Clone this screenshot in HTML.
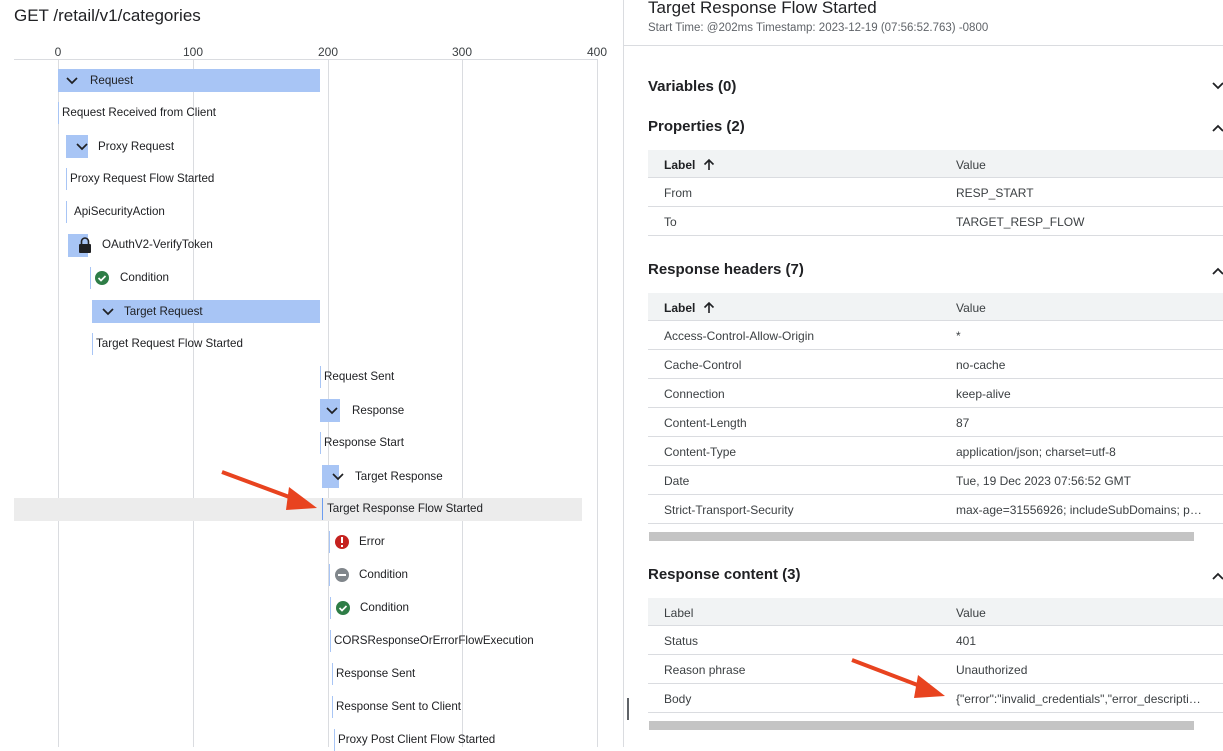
<!DOCTYPE html>
<html><head><meta charset="utf-8"><style>
*{margin:0;padding:0;box-sizing:border-box}
body{width:1223px;height:747px;overflow:hidden;background:#fff;font-family:"Liberation Sans",Arial,sans-serif;color:#202124;position:relative}
.a{position:absolute;white-space:nowrap}
.t{font-size:11.6px;color:#202124;line-height:14px}
.bar{position:absolute;background:#a8c5f5}
.ln{position:absolute;width:1px;background:#a8c5f5;height:22px}
.g{position:absolute;top:59px;width:1px;height:688px;background:#dadce0}
.tick{position:absolute;top:45px;font-size:12px;color:#3c4043;transform:translateX(-50%)}
.h{position:absolute;left:648px;font-size:15px;font-weight:bold;color:#202124}
.th{position:absolute;left:648px;width:575px;height:28px;background:#f1f3f4;border-bottom:1px solid #dadce0}
.row{position:absolute;left:648px;width:575px;height:29px;border-bottom:1px solid #dadce0}
.row span,.th span{position:absolute;top:8px;font-size:12px;color:#3c4043}
.c1{left:16px}.c2{left:308px}
.sb{position:absolute;left:649px;width:545px;height:9px;background:#c4c4c4}
</style></head><body>
<div class="a" style="left:14px;top:6px;font-size:17px">GET /retail/v1/categories</div>
<div class="tick" style="left:58px">0</div><div class="tick" style="left:193px">100</div><div class="tick" style="left:328px">200</div><div class="tick" style="left:462px">300</div><div class="tick" style="left:597px">400</div>
<div class="a" style="left:14px;top:59px;width:583px;height:1px;background:#dadce0"></div>
<div class="g" style="left:58px"></div><div class="g" style="left:193px"></div><div class="g" style="left:328px"></div><div class="g" style="left:462px"></div><div class="g" style="left:597px"></div>
<div class="a" style="left:14px;top:498px;width:568px;height:23px;background:#ececec"></div>

<div class="bar" style="left:58px;top:69px;width:262px;height:23px"></div>
<div class="bar" style="left:66px;top:135px;width:22px;height:23px"></div>
<div class="bar" style="left:68px;top:234px;width:20px;height:23px"></div>
<div class="bar" style="left:92px;top:300px;width:228px;height:23px"></div>
<div class="bar" style="left:320px;top:399px;width:20px;height:23px"></div>
<div class="bar" style="left:322px;top:465px;width:17px;height:23px"></div>

<div class="ln" style="left:58px;top:102px"></div>
<div class="ln" style="left:66px;top:168px"></div>
<div class="ln" style="left:66px;top:201px"></div>
<div class="ln" style="left:90px;top:267px"></div>
<div class="ln" style="left:92px;top:333px"></div>
<div class="ln" style="left:320px;top:366px"></div>
<div class="ln" style="left:320px;top:432px"></div>
<div class="ln" style="left:322px;top:498px;background:#6b9cf0"></div>
<div class="ln" style="left:329px;top:531px"></div>
<div class="ln" style="left:329px;top:564px"></div>
<div class="ln" style="left:330px;top:597px"></div>
<div class="ln" style="left:330px;top:630px"></div>
<div class="ln" style="left:332px;top:663px"></div>
<div class="ln" style="left:332px;top:696px"></div>
<div class="ln" style="left:334px;top:729px"></div>

<svg class="a" style="left:0;top:0" width="620" height="747">
<g fill="none" stroke="#202124" stroke-width="1.7">
<path d="M67 78l5 5 5-5"/><path d="M77 144l5 5 5-5"/><path d="M103 309l5 5 5-5"/><path d="M327 408l5 5 5-5"/><path d="M333 474l5 5 5-5"/>
</g>
<rect x="79" y="244" width="12" height="9" rx="1" fill="#202124"/><path d="M81.5 244v-2.5a3.5 3.5 0 0 1 7 0v2.5" stroke="#202124" stroke-width="1.6" fill="none"/>
<circle cx="102" cy="278" r="7" fill="#2e7d46"/><path d="M98.5 278l2.5 2.5 4.5-4.5" stroke="#fff" stroke-width="1.7" fill="none"/>
<circle cx="342" cy="542" r="7" fill="#c5221f"/><rect x="341" y="537" width="2" height="6" fill="#fff"/><rect x="341" y="545" width="2" height="2" fill="#fff"/>
<circle cx="342" cy="575" r="7" fill="#80868b"/><rect x="338" y="574" width="8" height="2" fill="#fff"/>
<circle cx="343" cy="608" r="7" fill="#2e7d46"/><path d="M339.5 608l2.5 2.5 4.5-4.5" stroke="#fff" stroke-width="1.7" fill="none"/>
<path d="M222 472L300 501" stroke="#e8431f" stroke-width="4"/><path d="M289 487L317 508 286 510z" fill="#e8431f"/>
</svg>

<div class="a t" style="left:90px;top:74px">Request</div>
<div class="a t" style="left:62px;top:106px">Request Received from Client</div>
<div class="a t" style="left:98px;top:140px">Proxy Request</div>
<div class="a t" style="left:70px;top:172px">Proxy Request Flow Started</div>
<div class="a t" style="left:74px;top:205px">ApiSecurityAction</div>
<div class="a t" style="left:102px;top:238px">OAuthV2-VerifyToken</div>
<div class="a t" style="left:120px;top:271px">Condition</div>
<div class="a t" style="left:124px;top:305px">Target Request</div>
<div class="a t" style="left:96px;top:337px">Target Request Flow Started</div>
<div class="a t" style="left:324px;top:370px">Request Sent</div>
<div class="a t" style="left:352px;top:404px">Response</div>
<div class="a t" style="left:324px;top:436px">Response Start</div>
<div class="a t" style="left:355px;top:470px">Target Response</div>
<div class="a t" style="left:327px;top:502px">Target Response Flow Started</div>
<div class="a t" style="left:359px;top:535px">Error</div>
<div class="a t" style="left:359px;top:568px">Condition</div>
<div class="a t" style="left:360px;top:601px">Condition</div>
<div class="a t" style="left:334px;top:634px">CORSResponseOrErrorFlowExecution</div>
<div class="a t" style="left:336px;top:667px">Response Sent</div>
<div class="a t" style="left:336px;top:700px">Response Sent to Client</div>
<div class="a t" style="left:338px;top:733px">Proxy Post Client Flow Started</div>

<div class="a" style="left:623px;top:0;width:1px;height:747px;background:#dadce0"></div>
<div class="a" style="left:627px;top:698px;width:2px;height:22px;background:#5f6368"></div>
<div class="a" style="left:648px;top:-2px;font-size:17px">Target Response Flow Started</div>
<div class="a" style="left:648px;top:22px;font-size:11.5px;color:#5f6368">Start Time: @202ms Timestamp: 2023-12-19 (07:56:52.763) -0800</div>
<div class="a" style="left:624px;top:45px;width:599px;height:1px;background:#dadce0"></div>

<div class="h" style="top:78px">Variables (0)</div>
<div class="h" style="top:118px">Properties (2)</div>
<div class="h" style="top:261px">Response headers (7)</div>
<div class="h" style="top:566px">Response content (3)</div>
<svg class="a" style="left:1205px;top:0" width="18" height="747" fill="none" stroke="#202124" stroke-width="1.8">
<path d="M8 83l5 5 5-5"/><path d="M8 131l5-5 5 5"/><path d="M8 274l5-5 5 5"/><path d="M8 579l5-5 5 5"/>
</svg>

<div class="th" style="top:150px"><span class="c1" style="color:#202124;font-weight:bold">Label</span><span class="c2">Value</span></div>
<div class="row" style="top:178px"><span class="c1">From</span><span class="c2">RESP_START</span></div>
<div class="row" style="top:207px"><span class="c1">To</span><span class="c2">TARGET_RESP_FLOW</span></div>

<div class="th" style="top:293px"><span class="c1" style="color:#202124;font-weight:bold">Label</span><span class="c2">Value</span></div>
<div class="row" style="top:321px"><span class="c1">Access-Control-Allow-Origin</span><span class="c2">*</span></div>
<div class="row" style="top:350px"><span class="c1">Cache-Control</span><span class="c2">no-cache</span></div>
<div class="row" style="top:379px"><span class="c1">Connection</span><span class="c2">keep-alive</span></div>
<div class="row" style="top:408px"><span class="c1">Content-Length</span><span class="c2">87</span></div>
<div class="row" style="top:437px"><span class="c1">Content-Type</span><span class="c2">application/json; charset=utf-8</span></div>
<div class="row" style="top:466px"><span class="c1">Date</span><span class="c2">Tue, 19 Dec 2023 07:56:52 GMT</span></div>
<div class="row" style="top:495px"><span class="c1">Strict-Transport-Security</span><span class="c2">max-age=31556926; includeSubDomains; p…</span></div>
<div class="sb" style="top:532px"></div>

<div class="th" style="top:598px"><span class="c1">Label</span><span class="c2">Value</span></div>
<div class="row" style="top:626px"><span class="c1">Status</span><span class="c2">401</span></div>
<div class="row" style="top:655px"><span class="c1">Reason phrase</span><span class="c2">Unauthorized</span></div>
<div class="row" style="top:684px"><span class="c1">Body</span><span class="c2">{"error":"invalid_credentials","error_descripti…</span></div>
<div class="sb" style="top:721px"></div>

<svg class="a" style="left:0;top:0" width="1223" height="747">
<g stroke="#202124" stroke-width="1.6" fill="none"><path d="M709 170v-10M704.5 164.5l4.5-4.5 4.5 4.5"/><path d="M709 313v-10M704.5 307.5l4.5-4.5 4.5 4.5"/></g>
<path d="M852 660L928 689" stroke="#e8431f" stroke-width="4"/><path d="M918 675L945 696 914 698z" fill="#e8431f"/>
</svg>
</body></html>
